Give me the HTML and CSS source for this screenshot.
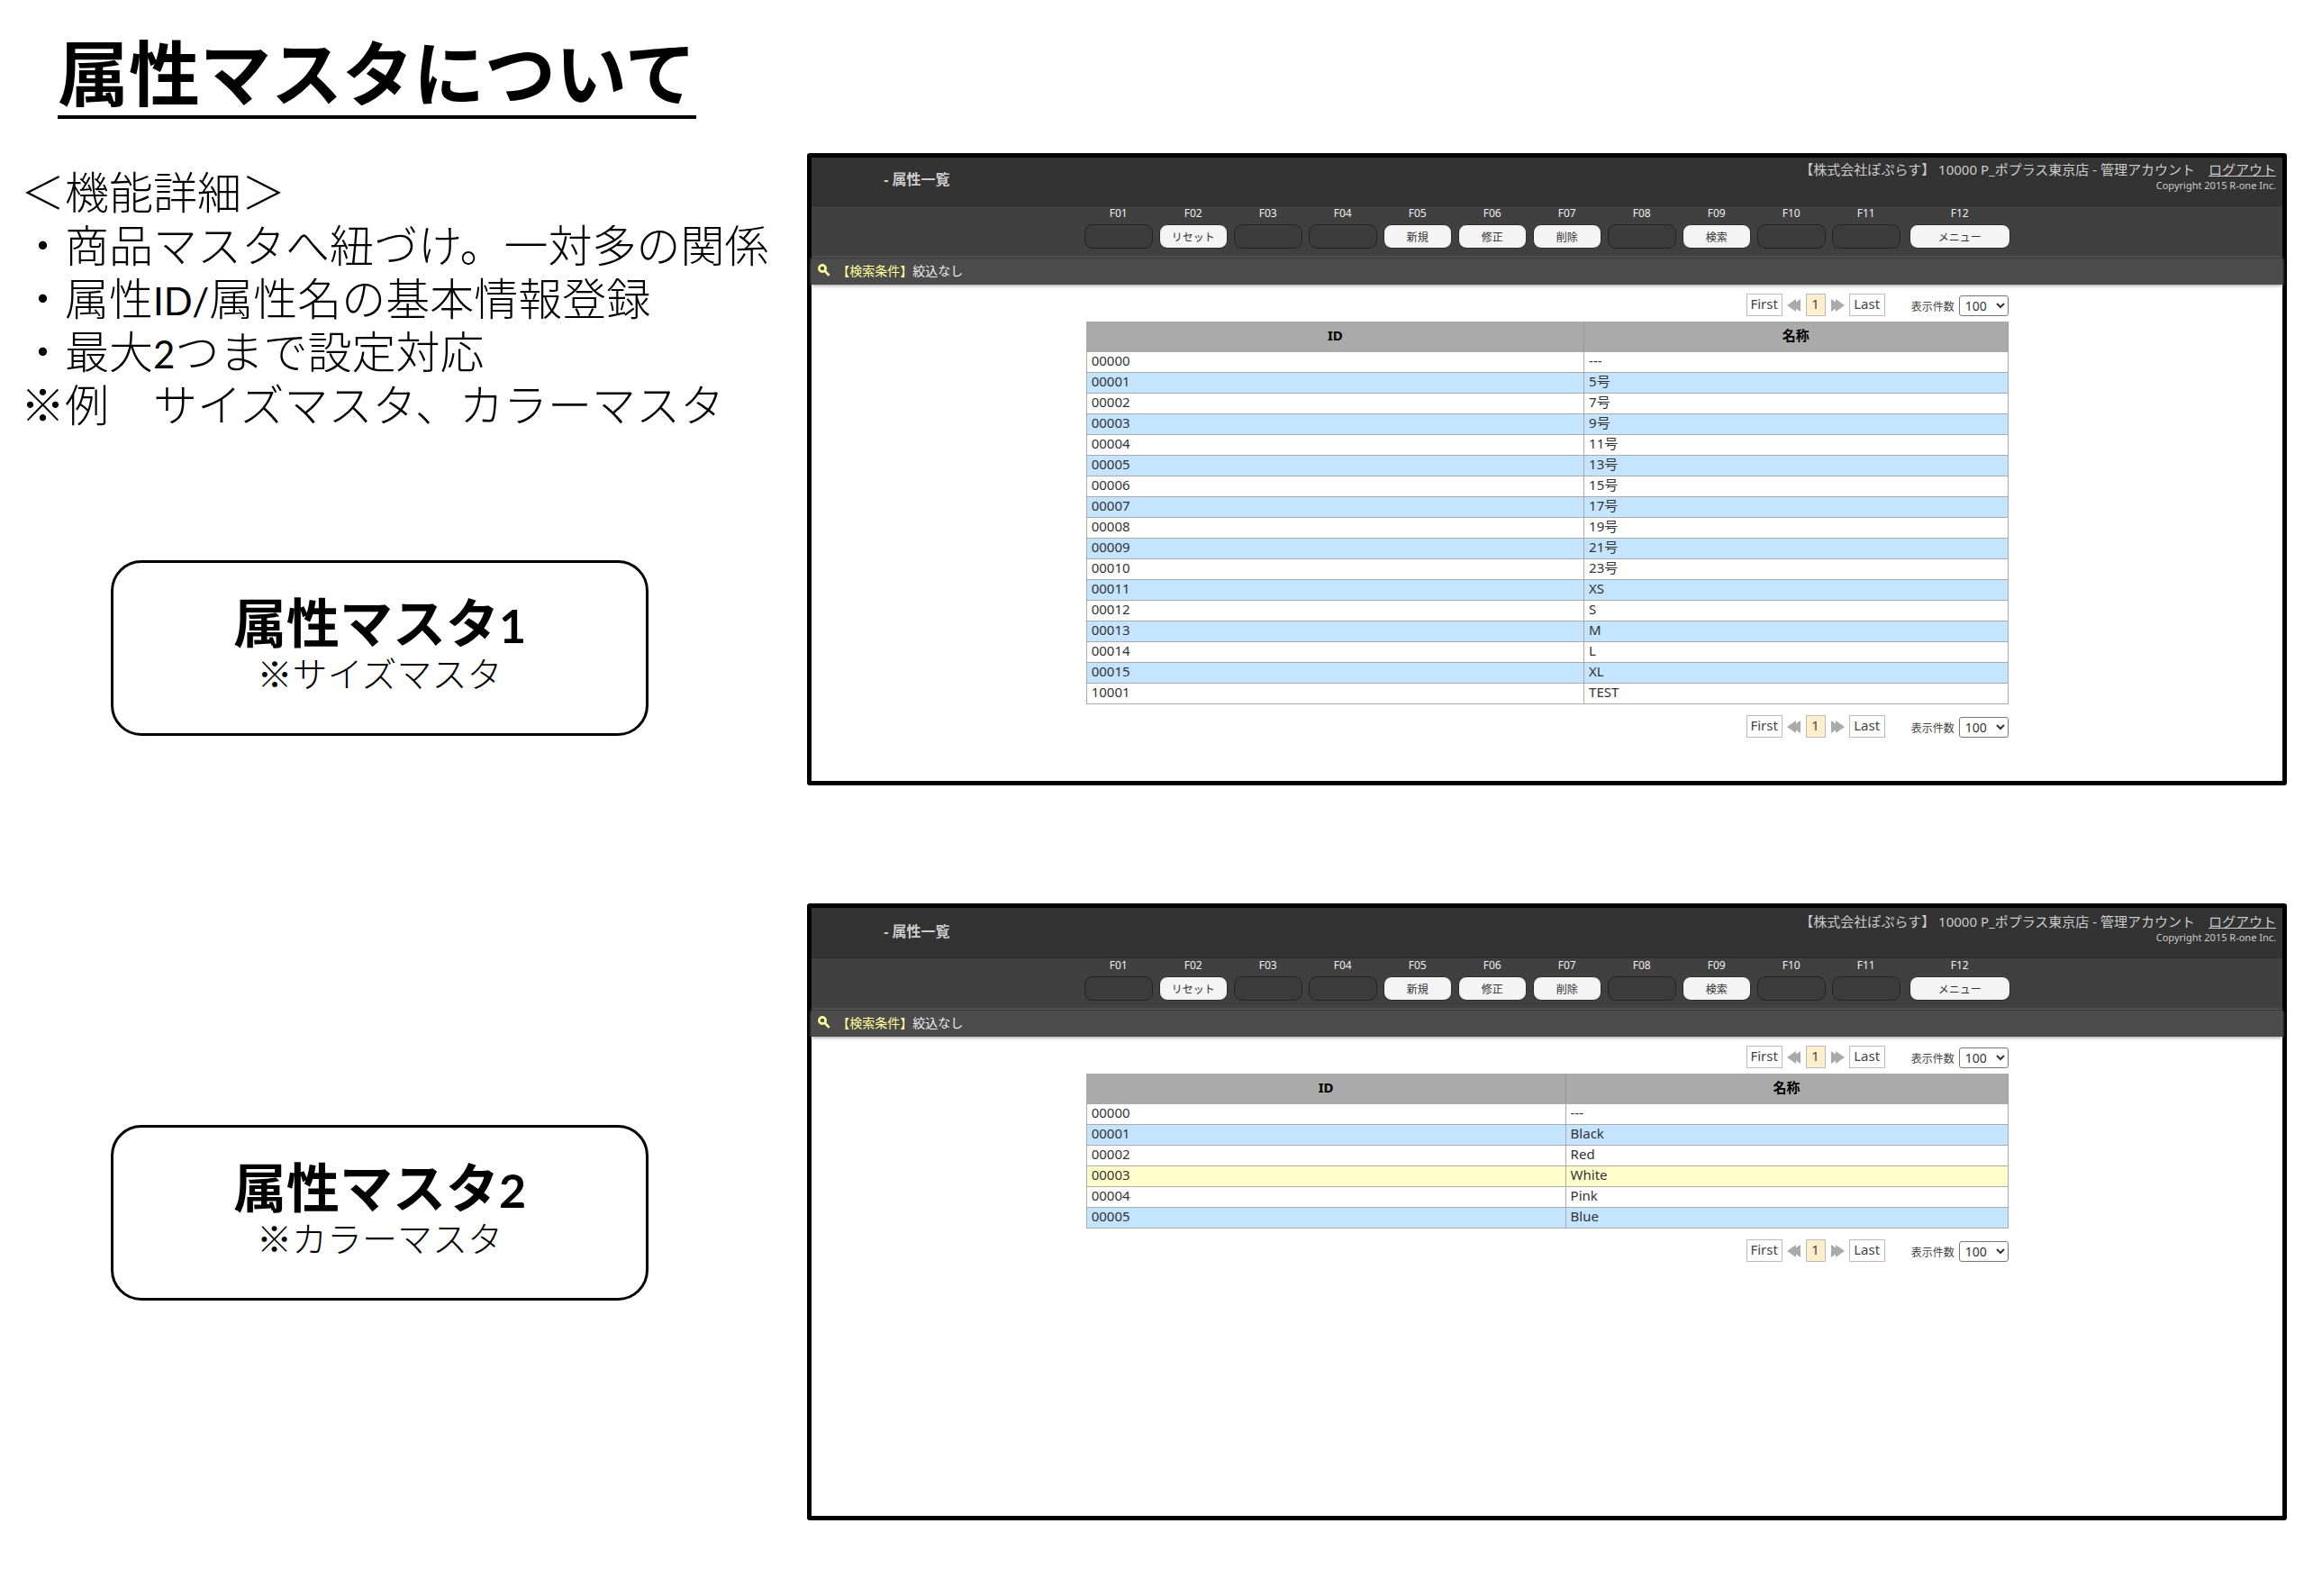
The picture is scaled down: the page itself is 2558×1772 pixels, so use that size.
FILE: index.html
```html
<!DOCTYPE html>
<html lang="ja">
<head>
<meta charset="UTF-8">
<title>属性マスタについて</title>
<link rel="stylesheet" href="styles.css">
</head>
<body>
<div class="slide">
<div class="left">
    <h1 class="slide-title">属性マスタについて</h1>
    <div class="details">
        <p>＜機能詳細＞</p>
        <p>・商品マスタへ紐づけ。一対多の関係</p>
        <p>・属性<span class="latin">ID/</span>属性名の基本情報登録</p>
        <p>・最大<span class="latin">2</span>つまで設定対応</p>
        <p>※例　サイズマスタ、カラーマスタ</p>
    </div>
    <div class="master-box">
        <h2>属性マスタ<span class="latin">1</span></h2>
        <p>※サイズマスタ</p>
    </div>
    <div class="master-box">
        <h2>属性マスタ<span class="latin">2</span></h2>
        <p>※カラーマスタ</p>
    </div>
</div>

<div class="right">
    <section class="screen screen-size">
        <header class="screen-header">
            <h3>- 属性一覧</h3>
            <div class="account">
                <div class="account-line"><span>【株式会社ぽぷらす】 10000 P_ポプラス東京店 - 管理アカウント</span><a href="#">ログアウト</a></div>
                <small>Copyright 2015 R-one Inc.</small>
            </div>
        </header>
        <div class="function-bar">
            <div class="fkey"><label for="a-f01">F01</label><button id="a-f01" disabled></button></div>
            <div class="fkey"><label for="a-f02">F02</label><button id="a-f02">リセット</button></div>
            <div class="fkey"><label for="a-f03">F03</label><button id="a-f03" disabled></button></div>
            <div class="fkey"><label for="a-f04">F04</label><button id="a-f04" disabled></button></div>
            <div class="fkey"><label for="a-f05">F05</label><button id="a-f05">新規</button></div>
            <div class="fkey"><label for="a-f06">F06</label><button id="a-f06">修正</button></div>
            <div class="fkey"><label for="a-f07">F07</label><button id="a-f07">削除</button></div>
            <div class="fkey"><label for="a-f08">F08</label><button id="a-f08" disabled></button></div>
            <div class="fkey"><label for="a-f09">F09</label><button id="a-f09">検索</button></div>
            <div class="fkey"><label for="a-f10">F10</label><button id="a-f10" disabled></button></div>
            <div class="fkey"><label for="a-f11">F11</label><button id="a-f11" disabled></button></div>
            <div class="fkey fkey-menu"><label for="a-f12">F12</label><button id="a-f12">メニュー</button></div>
        </div>
        <div class="search-bar">
            <svg class="search-icon" viewBox="0 0 14 14"><circle cx="5" cy="5" r="3.6"/><path d="M8 8l4.6 4.8"/></svg>
            <span class="search-label">【検索条件】</span>
            <span>絞込なし</span>
        </div>
        <div class="list">
            <div class="pager">
                <a class="page-link" href="#">First</a>
                <svg class="arrow" viewBox="0 0 16 14"><path d="M10 0L0 7l10 7zM15 0L5 7l10 7z"/></svg>
                <a class="page-link current" href="#">1</a>
                <svg class="arrow arrow-next" viewBox="0 0 16 14"><path d="M6 0l10 7-10 7zM1 0l10 7-10 7z"/></svg>
                <a class="page-link" href="#">Last</a>
                <label for="a-top">表示件数</label>
                <select id="a-top"><option>100</option></select>
            </div>
            <table>
                <thead><tr><th>ID</th><th>名称</th></tr></thead>
                <tbody>
                    <tr><td>00000</td><td>---</td></tr>
                    <tr><td>00001</td><td>5号</td></tr>
                    <tr><td>00002</td><td>7号</td></tr>
                    <tr><td>00003</td><td>9号</td></tr>
                    <tr><td>00004</td><td>11号</td></tr>
                    <tr><td>00005</td><td>13号</td></tr>
                    <tr><td>00006</td><td>15号</td></tr>
                    <tr><td>00007</td><td>17号</td></tr>
                    <tr><td>00008</td><td>19号</td></tr>
                    <tr><td>00009</td><td>21号</td></tr>
                    <tr><td>00010</td><td>23号</td></tr>
                    <tr><td>00011</td><td>XS</td></tr>
                    <tr><td>00012</td><td>S</td></tr>
                    <tr><td>00013</td><td>M</td></tr>
                    <tr><td>00014</td><td>L</td></tr>
                    <tr><td>00015</td><td>XL</td></tr>
                    <tr><td>10001</td><td>TEST</td></tr>
                </tbody>
            </table>
            <div class="pager">
                <a class="page-link" href="#">First</a>
                <svg class="arrow" viewBox="0 0 16 14"><path d="M10 0L0 7l10 7zM15 0L5 7l10 7z"/></svg>
                <a class="page-link current" href="#">1</a>
                <svg class="arrow arrow-next" viewBox="0 0 16 14"><path d="M6 0l10 7-10 7zM1 0l10 7-10 7z"/></svg>
                <a class="page-link" href="#">Last</a>
                <label for="a-bottom">表示件数</label>
                <select id="a-bottom"><option>100</option></select>
            </div>
        </div>
    </section>

    <section class="screen screen-color">
        <header class="screen-header">
            <h3>- 属性一覧</h3>
            <div class="account">
                <div class="account-line"><span>【株式会社ぽぷらす】 10000 P_ポプラス東京店 - 管理アカウント</span><a href="#">ログアウト</a></div>
                <small>Copyright 2015 R-one Inc.</small>
            </div>
        </header>
        <div class="function-bar">
            <div class="fkey"><label for="b-f01">F01</label><button id="b-f01" disabled></button></div>
            <div class="fkey"><label for="b-f02">F02</label><button id="b-f02">リセット</button></div>
            <div class="fkey"><label for="b-f03">F03</label><button id="b-f03" disabled></button></div>
            <div class="fkey"><label for="b-f04">F04</label><button id="b-f04" disabled></button></div>
            <div class="fkey"><label for="b-f05">F05</label><button id="b-f05">新規</button></div>
            <div class="fkey"><label for="b-f06">F06</label><button id="b-f06">修正</button></div>
            <div class="fkey"><label for="b-f07">F07</label><button id="b-f07">削除</button></div>
            <div class="fkey"><label for="b-f08">F08</label><button id="b-f08" disabled></button></div>
            <div class="fkey"><label for="b-f09">F09</label><button id="b-f09">検索</button></div>
            <div class="fkey"><label for="b-f10">F10</label><button id="b-f10" disabled></button></div>
            <div class="fkey"><label for="b-f11">F11</label><button id="b-f11" disabled></button></div>
            <div class="fkey fkey-menu"><label for="b-f12">F12</label><button id="b-f12">メニュー</button></div>
        </div>
        <div class="search-bar">
            <svg class="search-icon" viewBox="0 0 14 14"><circle cx="5" cy="5" r="3.6"/><path d="M8 8l4.6 4.8"/></svg>
            <span class="search-label">【検索条件】</span>
            <span>絞込なし</span>
        </div>
        <div class="list">
            <div class="pager">
                <a class="page-link" href="#">First</a>
                <svg class="arrow" viewBox="0 0 16 14"><path d="M10 0L0 7l10 7zM15 0L5 7l10 7z"/></svg>
                <a class="page-link current" href="#">1</a>
                <svg class="arrow arrow-next" viewBox="0 0 16 14"><path d="M6 0l10 7-10 7zM1 0l10 7-10 7z"/></svg>
                <a class="page-link" href="#">Last</a>
                <label for="b-top">表示件数</label>
                <select id="b-top"><option>100</option></select>
            </div>
            <table>
                <thead><tr><th>ID</th><th>名称</th></tr></thead>
                <tbody>
                    <tr><td>00000</td><td>---</td></tr>
                    <tr><td>00001</td><td>Black</td></tr>
                    <tr><td>00002</td><td>Red</td></tr>
                    <tr class="selected"><td>00003</td><td>White</td></tr>
                    <tr><td>00004</td><td>Pink</td></tr>
                    <tr><td>00005</td><td>Blue</td></tr>
                </tbody>
            </table>
            <div class="pager">
                <a class="page-link" href="#">First</a>
                <svg class="arrow" viewBox="0 0 16 14"><path d="M10 0L0 7l10 7zM15 0L5 7l10 7z"/></svg>
                <a class="page-link current" href="#">1</a>
                <svg class="arrow arrow-next" viewBox="0 0 16 14"><path d="M6 0l10 7-10 7zM1 0l10 7-10 7z"/></svg>
                <a class="page-link" href="#">Last</a>
                <label for="b-bottom">表示件数</label>
                <select id="b-bottom"><option>100</option></select>
            </div>
        </div>
    </section>
</div>
</div>
</body>
</html>
```
FILE: styles.css
```css
* {
    box-sizing: border-box;
}
body {
    margin: 0;
    background: #fff;
    color: #000;
    font-family: "Noto Sans CJK JP", sans-serif;
}
h1, h2, h3, p {
    margin: 0;
}
.slide {
    display: grid;
    grid-template-columns: 35% 1fr;
}

/* left side: explanation */
.left {
    padding-top: 30px;
}
.slide-title {
    width: fit-content;
    margin-left: 64px;
    padding-bottom: 2px;
    border-bottom: 4px solid #000;
    font-size: 79px;
    font-weight: 700;
    line-height: 96px;
}
.details {
    margin: 49px 0 0 23px;
    font-size: 49px;
    font-weight: 300;
    line-height: 59px;
    white-space: nowrap;
}
.latin {
    font-family: Lato, sans-serif;
    line-height: 1;
}
.details .latin {
    font-size: 42px;
    font-weight: 400;
}
.master-box {
    width: 597px;
    height: 195px;
    margin: 146px 0 0 123px;
    padding-top: 32px;
    border: 3px solid #000;
    border-radius: 34px;
    text-align: center;
}
.master-box + .master-box {
    margin-top: 432px;
}
.master-box h2 {
    font-size: 59px;
    line-height: 64px;
}
.master-box h2 .latin {
    font-size: 52px;
}
.master-box p {
    font-size: 39px;
    font-weight: 300;
    line-height: 50px;
}

/* right side: the two list screens */
.right {
    display: flex;
    flex-direction: column;
    gap: 131px;
    padding: 170px 19px 0 1px;
}
.screen {
    border: 5px solid #000;
    border-radius: 3px;
    font-family: "Noto Sans", "Noto Sans CJK JP", sans-serif;
    font-size: 15px;
    color: #333;
}
.screen-size {
    min-height: 702px;
}
.screen-color {
    min-height: 685px;
}
.screen-header {
    display: flex;
    justify-content: space-between;
    height: 53px;
    padding: 0 7px 0 80px;
    background: #333;
    color: #ccc;
}
.screen-color .screen-header {
    height: 55px;
    padding-top: 2px;
}
.screen-header h3 {
    font-size: 16px;
    line-height: 48px;
}
.account {
    padding-top: 3px;
    text-align: right;
}
.account-line {
    display: flex;
    gap: 15px;
    line-height: 20px;
}
.account a {
    color: #ccc;
}
.account small {
    display: block;
    font-size: 11px;
    line-height: 16px;
}
.function-bar {
    display: flex;
    justify-content: center;
    gap: 7px;
    height: 58px;
    background: #404040;
    border-top: 1px solid #2e2e2e;
}
.fkey {
    display: flex;
    flex-direction: column;
    align-items: center;
    width: 76px;
}
.fkey-menu {
    width: 112px;
    margin-left: 3px;
}
.fkey label {
    padding-bottom: 4px;
    color: #eee;
    font-size: 12px;
    line-height: 16px;
}
.fkey button {
    width: 100%;
    height: 27px;
    padding: 0;
    border: 1px solid #2a2a2a;
    border-radius: 9px;
    background: #f4f4f4;
    color: #333;
    font-family: "Noto Sans CJK JP", sans-serif;
    font-size: 12px;
}
.fkey button:disabled {
    border: 1px solid #222;
    background: #3c3c3c;
}
.search-bar {
    display: flex;
    align-items: center;
    height: 30px;
    padding: 0 0 4px 7px;
    border-top: 1px solid #363636;
    background: #4c4c4c;
    box-shadow: 0 1px 4px #999;
    color: #eee;
    font-size: 14px;
}
.search-icon {
    width: 14px;
    height: 14px;
    margin-right: 7px;
    fill: none;
    stroke: #ff9;
    stroke-width: 2.6;
}
.search-label {
    color: #ff9;
}
.list {
    width: 1024px;
    margin: 10px auto 0;
}
.pager {
    display: flex;
    justify-content: flex-end;
    align-items: center;
    height: 25px;
    color: #444;
}
.page-link {
    width: 40px;
    height: 25px;
    border: 1px solid #bbb;
    color: #444;
    line-height: 20px;
    text-align: center;
    text-decoration: none;
}
.page-link.current {
    width: 22px;
    background: #fec;
}
.arrow {
    width: 16px;
    height: 14px;
    margin: 0 5px;
    fill: #aaa;
}
.pager label {
    margin: 2px 5px 0 29px;
    font-size: 12px;
}
.pager select {
    width: 55px;
    height: 23px;
    margin-top: 2px;
    padding: 0 2px;
    border: 1px solid #767676;
    border-radius: 3px;
    background-color: #fff;
    color: #333;
    font-family: "Noto Sans", sans-serif;
    font-size: 14px;
}
table {
    width: 100%;
    margin: 6px 0 12px;
    border-collapse: collapse;
    table-layout: fixed;
}
th, td {
    height: 23px;
    padding: 0 5px 4px;
    border: 1px solid #aaa;
    line-height: 18px;
    text-align: left;
}
th {
    height: 33px;
    border-right-color: #999;
    background: #aaa;
    color: #000;
    text-align: center;
}
th:first-child {
    width: 54%;
}
.screen-color th:first-child {
    width: 52%;
}
tbody tr:nth-child(even) {
    background: #c5e4ff;
}
tbody tr.selected:nth-child(even) {
    background: #ffffcb;
}
```
